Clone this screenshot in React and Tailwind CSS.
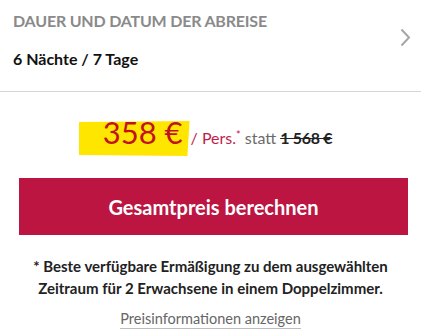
export default function App() {
  return (
    <div className="w-[421px] h-[332px] bg-white overflow-hidden font-['Lato','Liberation_Sans',sans-serif]">
      {/* Trip duration */}
      <div className="flex items-start justify-between h-[92px] border-b border-[#d6d6d6] pl-[13px] pr-[10px] pt-[11px]">
        <div className="flex flex-col">
          <span className="text-[16px] leading-[20px] font-bold text-[#8a8a8a] uppercase tracking-[-0.2px]">
            Dauer und Datum der Abreise
          </span>
          <span className="mt-[18px] text-[16px] leading-[20px] font-bold text-[#111]">
            6 Nächte / 7 Tage
          </span>
        </div>
        <svg width="11" height="19" viewBox="0 0 11 19" className="mt-[17px]">
          <path d="M1.5 1.5 L9 9.5 L1.5 17.5" fill="none" stroke="#a6a6a6" strokeWidth="2" />
        </svg>
      </div>

      {/* Price */}
      <div className="flex justify-center pt-[24px] pr-[10px] h-[86px]">
        <div className="flex items-baseline h-[32px]">
          <span className="relative pl-[24px] pr-[7px] text-[31px] leading-[32px] text-[#c1121f]">
            <span className="absolute left-0 right-0 top-[5px] bottom-[-8px] bg-[#ffe600] [clip-path:polygon(0_3%,100%_0,98%_100%,0_97%)]" />
            <span className="relative">358 €</span>
          </span>
          <span className="ml-[1px] text-[16px] text-[#be1e4c]">/ Pers.<sup className="text-[11px]">*</sup></span>
          <span className="ml-[4px] text-[16px] text-[#6b6b6b]">statt</span>
          <span className="ml-[4px] text-[16px] font-bold text-[#222] line-through tracking-[-0.3px]">1 568 €</span>
        </div>
      </div>

      {/* CTA */}
      <div className="pl-[19px] pr-[13px]">
        <button className="w-full h-[57px] bg-[#bc1542] text-white text-[20px] font-bold">
          Gesamtpreis berechnen
        </button>
      </div>

      <p className="mt-[20px] px-[20px] text-center text-[15px] leading-[22px] font-bold text-[#222]">
        * Beste verfügbare Ermäßigung zu dem ausgewählten Zeitraum für 2 Erwachsene in einem Doppelzimmer.
      </p>
      <div className="mt-[10px] flex justify-center">
        <span className="text-[14.5px] leading-[19px] text-[#666] border-b border-[#bdbdbd]">
          Preisinformationen anzeigen
        </span>
      </div>
    </div>
  );
}
